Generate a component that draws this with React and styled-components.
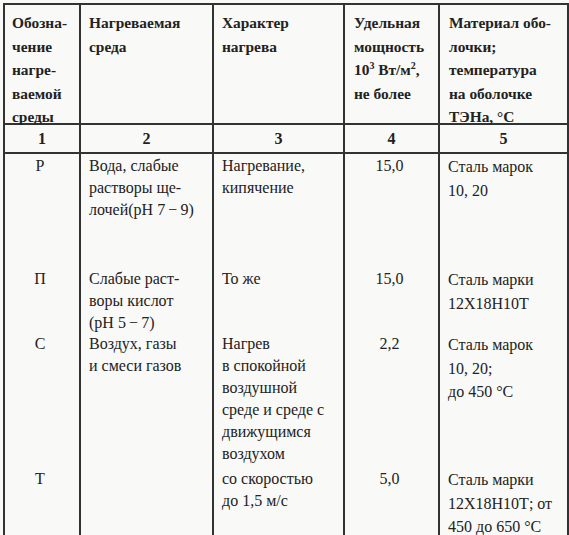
import React from "react";
import styled, { createGlobalStyle } from "styled-components";

const Global = createGlobalStyle`
  html, body { margin: 0; padding: 0; background: #f9f9f7; }
  body { font-family: "Liberation Serif", "Times New Roman", serif; color: #222; }
`;

const Table = styled.div`
  display: grid;
  grid-template-columns: 76px 133px 131px 95px 129px;
  grid-template-rows: 120px 29px 113px 65px 135px 80px;
  margin: 3px 0 0 3px;
  border-left: 2px solid #333;
  border-top: 2px solid #333;
  width: max-content;
  height: 532px;
  overflow: hidden;
`;

const HeadCell = styled.div`
  border-right: 2px solid #333;
  border-bottom: 2px solid #333;
  padding: 6px 4px 0 ${(p) => p.$pl || 8}px;
  font-weight: bold;
  font-size: 15.4px;
  line-height: 23.6px;
`;

const NumCell = styled.div`
  border-right: 2px solid #333;
  border-bottom: 2px solid #333;
  font-weight: bold;
  font-size: 16px;
  display: flex;
  align-items: center;
  justify-content: center;
`;

const Cell = styled.div`
  border-right: 2px solid #333;
  padding: 1px 4px 0 ${(p) => (p.$center ? 0 : 8)}px;
  text-align: ${(p) => (p.$center ? "center" : "left")};
  font-size: 16px;
  line-height: ${(p) => p.$lh}px;
`;

const Sup = styled.sup`
  font-size: 10px;
  line-height: 0;
`;

const heads = [
  { pl: 7, t: ["Обозна-", "чение", "нагре-", "ваемой", "среды"] },
  { t: ["Нагреваемая", "среда"] },
  { t: ["Характер", "нагрева"] },
  { pl: 9, t: null },
  { pl: 9, t: ["Материал обо-", "лочки;", "температура", "на оболочке", "ТЭНа, °С"] },
];

const rows = [
  [["Р"], ["Вода, слабые", "растворы ще-", "лочей(pH 7\u2009−\u20099)"], ["Нагревание,", "кипячение"], ["15,0"], ["Сталь марок", "10, 20"]],
  [["П"], ["Слабые раст-", "воры кислот", "(pH 5\u2009−\u20097)"], ["То же"], ["15,0"], ["Сталь марки", "12Х18Н10Т"]],
  [["С"], ["Воздух, газы", "и смеси газов"], ["Нагрев", "в спокойной", "воздушной", "среде и среде с", "движущимся", "воздухом"], ["2,2"], ["Сталь марок", "10, 20;", "до 450 °С"]],
  [["Т"], [], ["со скоростью", "до 1,5 м/с"], ["5,0"], ["Сталь марки", "12Х18Н10Т; от", "450 до 650 °С"]],
];

const Lines = ({ t }) =>
  t.map((l, i) => (
    <React.Fragment key={i}>
      {l}
      {i < t.length - 1 && <br />}
    </React.Fragment>
  ));

export default function App() {
  return (
    <>
      <Global />
      <Table>
        {heads.map((h, i) => (
          <HeadCell key={i} $pl={h.pl}>
            {h.t ? (
              <Lines t={h.t} />
            ) : (
              <>
                Удельная
                <br />
                мощность
                <br />
                10<Sup>3</Sup> Вт/м<Sup>2</Sup>,
                <br />
                не более
              </>
            )}
          </HeadCell>
        ))}
        {[1, 2, 3, 4, 5].map((n) => (
          <NumCell key={n}>{n}</NumCell>
        ))}
        {rows.map((r, ri) =>
          r.map((c, ci) => (
            <Cell
              key={ri + "-" + ci}
              $center={ci === 0 || ci === 3}
              $lh={ci === 4 ? 23.5 : 22}
            >
              <Lines t={c} />
            </Cell>
          ))
        )}
      </Table>
    </>
  );
}
